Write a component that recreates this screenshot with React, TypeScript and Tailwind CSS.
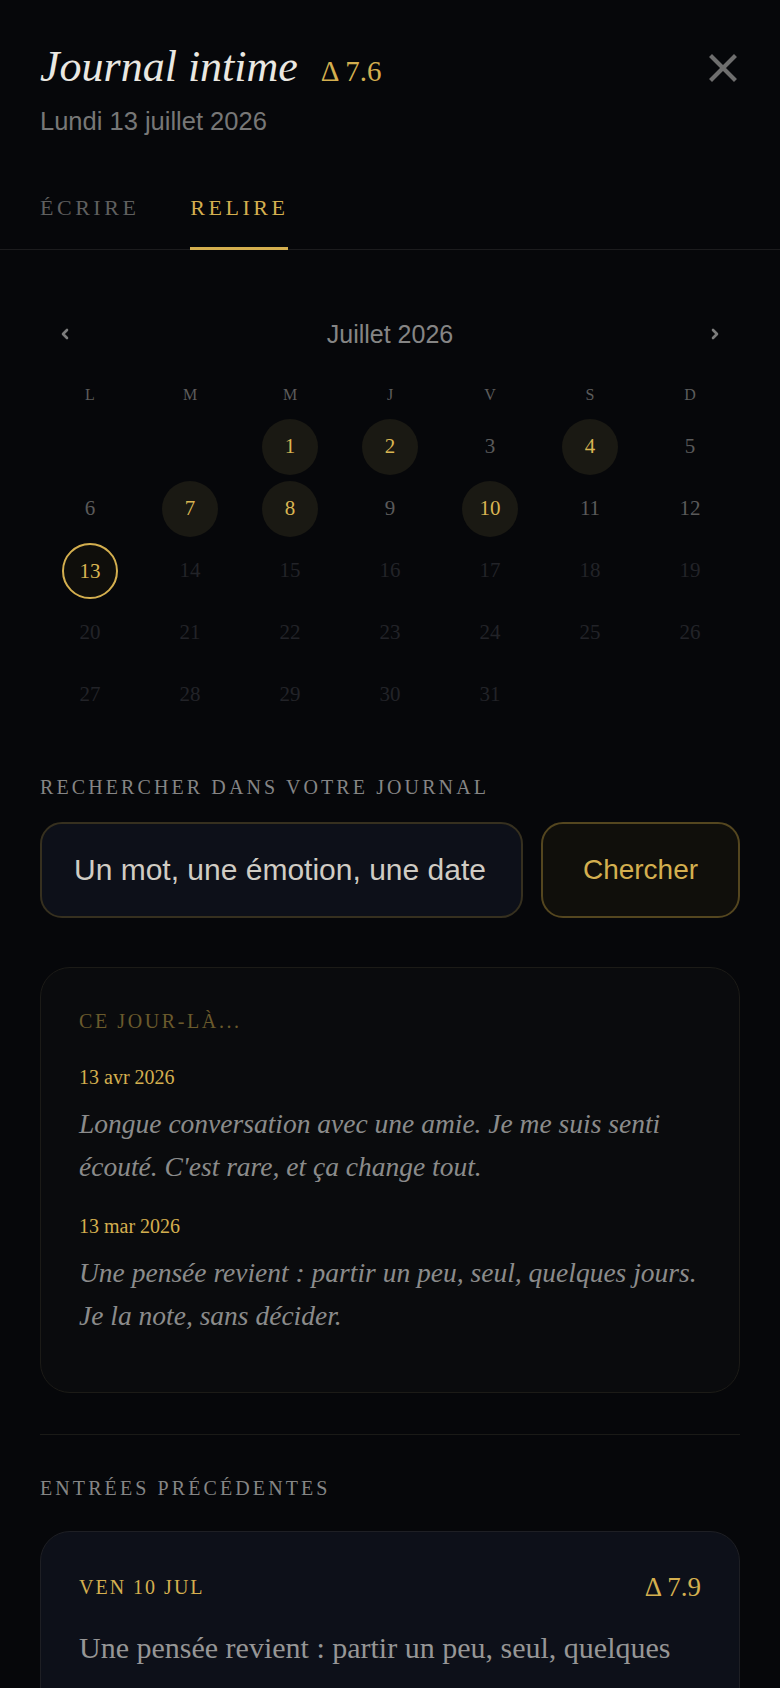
import { useState } from 'react';

const serif = { fontFamily: '"Liberation Serif", "Times New Roman", serif' };
const sans = { fontFamily: '"Liberation Sans", Arial, sans-serif' };

const withEntry = [1, 2, 4, 7, 8, 10];
const today = 13;

const memories = [
  {
    date: '13 avr 2026',
    text: "Longue conversation avec une amie. Je me suis senti écouté. C'est rare, et ça change tout.",
  },
  {
    date: '13 mar 2026',
    text: 'Une pensée revient : partir un peu, seul, quelques jours. Je la note, sans décider.',
  },
];

const entries = [
  { day: 'Ven 10 jul', score: '7.9', text: 'Une pensée revient : partir un peu, seul, quelques jours. Je la note, sans décider.' },
  { day: 'Mer 8 jul', score: '7.4', text: 'Matinée calme. Un café en terrasse, le bruit de la ville au loin.' },
];

function CloseIcon() {
  return (
    <svg width="30" height="30" viewBox="0 0 30 30" fill="none" stroke="#6e6e6e" strokeWidth="4.2" strokeLinecap="square">
      <path d="M4 4 L26 26 M26 4 L4 26" />
    </svg>
  );
}

function Chevron({ dir }: { dir: 'left' | 'right' }) {
  return (
    <svg width="10" height="14" viewBox="0 0 10 14" fill="none" stroke="#7c7c7c" strokeWidth="2.6" strokeLinecap="round" strokeLinejoin="round">
      {dir === 'left' ? <path d="M7 3 L3 7 L7 11" /> : <path d="M3 3 L7 7 L3 11" />}
    </svg>
  );
}

function Calendar() {
  const cells: (number | null)[] = [null, null];
  for (let d = 1; d <= 31; d++) cells.push(d);

  return (
    <section className="mt-[67px]">
      <div className="flex items-center justify-between">
        <button type="button" className="flex h-[35px] w-[50px] items-center justify-center">
          <Chevron dir="left" />
        </button>
        <h2 className="text-[25px] leading-[35px] text-[#858585]" style={sans}>
          Juillet 2026
        </h2>
        <button type="button" className="flex h-[35px] w-[50px] items-center justify-center">
          <Chevron dir="right" />
        </button>
      </div>

      <div className="mt-[31px] grid grid-cols-7 text-center text-[16px] leading-6 text-[#5c5c5c]" style={serif}>
        {['L', 'M', 'M', 'J', 'V', 'S', 'D'].map((d, i) => (
          <span key={i}>{d}</span>
        ))}
      </div>

      <div className="mt-[12px] grid grid-cols-7 gap-y-[6px]" style={serif}>
        {cells.map((d, i) => {
          if (d === null) return <div key={i} className="h-[56px]" />;
          const has = withEntry.includes(d);
          const isToday = d === today;
          const future = d > today;
          return (
            <div key={i} className="flex h-[56px] items-center justify-center">
              <span
                className={
                  isToday
                    ? 'flex size-[56px] items-center justify-center rounded-full border-[2.5px] border-[#d4af4f] bg-[#0f0e0b] pt-[3px] text-[21px] text-[#d9b552]'
                    : has
                      ? 'flex size-[56px] items-center justify-center rounded-full bg-[#1a1913] text-[21px] text-[#d9b552]'
                      : future
                        ? 'flex size-[56px] items-center justify-center text-[21px] text-[#222328]'
                        : 'flex size-[56px] items-center justify-center text-[21px] text-[#5a5a5a]'
                }
              >
                {d}
              </span>
            </div>
          );
        })}
      </div>
    </section>
  );
}

export default function App() {
  const [tab, setTab] = useState<'ecrire' | 'relire'>('relire');
  const [query, setQuery] = useState('');

  return (
    <div className="min-h-screen w-full bg-[#06070a] pb-10">
      <header className="px-10 pt-10">
        <div className="flex items-center justify-between">
          <div className="flex items-baseline gap-[23px]" style={serif}>
            <h1 className="text-[44px] italic leading-[53px] text-[#eae8e2]">Journal intime</h1>
            <span className="text-[29px] text-[#d4af4f]">Δ 7.6</span>
          </div>
          <button type="button" aria-label="Fermer" className="mr-[2px] mt-[2px]">
            <CloseIcon />
          </button>
        </div>
        <p className="mt-[10px] text-[25.5px] leading-[35px] text-[#777777]" style={sans}>
          Lundi 13 juillet 2026
        </p>
      </header>

      <nav className="mt-[56px] flex gap-[51px] border-b border-[#1c1c1e] px-10" style={serif}>
        <button
          type="button"
          onClick={() => setTab('ecrire')}
          className={
            tab === 'ecrire'
              ? '-mb-px border-b-[3px] border-[#d4af4f] pb-[26px] text-[22px] uppercase leading-[26px] tracking-[0.16em] text-[#d4af4f]'
              : '-mb-px border-b-[3px] border-transparent pb-[26px] text-[22px] uppercase leading-[26px] tracking-[0.16em] text-[#5f5f5f]'
          }
        >
          Écrire
        </button>
        <button
          type="button"
          onClick={() => setTab('relire')}
          className={
            tab === 'relire'
              ? '-mb-px border-b-[3px] border-[#d4af4f] pb-[26px] text-[22px] uppercase leading-[26px] tracking-[0.16em] text-[#d4af4f]'
              : '-mb-px border-b-[3px] border-transparent pb-[26px] text-[22px] uppercase leading-[26px] tracking-[0.16em] text-[#5f5f5f]'
          }
        >
          Relire
        </button>
      </nav>

      <main className="px-10">
        <Calendar />

        <section className="mt-[50px]">
          <p className="text-[20px] uppercase leading-[28px] tracking-[0.155em] text-[#858585]" style={serif}>
            Rechercher dans votre journal
          </p>
          <div className="mt-[21px] flex gap-[18px]">
            <input
              value={query}
              onChange={(e) => setQuery(e.target.value)}
              placeholder="Un mot, une émotion, une date…"
              className="h-[96px] min-w-0 flex-1 rounded-[22px] border-2 border-[#36301f] bg-[#0d1019] px-[32px] text-[30px] text-[#d6d2ca] outline-none placeholder:text-[#d0ccc4]"
              style={sans}
            />
            <button
              type="button"
              className="h-[96px] w-[199px] rounded-[22px] border-2 border-[#54461f] bg-[#100f0b] text-[28px] text-[#d4af4f]"
              style={sans}
            >
              Chercher
            </button>
          </div>
        </section>

        <section className="mt-[49px] rounded-[30px] border border-[#1c1b17] bg-[#0a0b0d] px-[38px] pb-[31px] pt-[39px]" style={serif}>
          <p className="text-[20px] uppercase leading-[28px] tracking-[0.13em] text-[#6a5a2c]">Ce jour-là...</p>
          <div className="mt-[28px]">
            {memories.map((m) => (
              <div key={m.date} className="mb-[24px]">
                <p className="text-[20px] leading-[28px] text-[#d4af4f]">{m.date}</p>
                <p className="mt-[11px] text-[27.5px] italic leading-[43px] text-[#8b8b8b]">{m.text}</p>
              </div>
            ))}
          </div>
        </section>

        <div className="mt-[41px] h-px bg-[#1a1a17]" />

        <section className="mt-[39px]" style={serif}>
          <p className="text-[20px] uppercase leading-[28px] tracking-[0.155em] text-[#858585]">Entrées précédentes</p>
          <div className="mt-[29px] flex flex-col gap-5">
            {entries.map((e) => (
              <article key={e.day} className="rounded-[30px] border border-[#1e1f24] bg-[#0d1019] px-[38px] pb-[38px] pt-[41px]">
                <div className="flex items-center justify-between">
                  <p className="text-[20px] uppercase leading-[28px] tracking-[0.1em] text-[#d4af4f]">{e.day}</p>
                  <p className="text-[27px] leading-[28px] text-[#d4af4f]">Δ {e.score}</p>
                </div>
                <p className="mt-[20px] text-[30px] leading-[54px] text-[#969696]">{e.text}</p>
              </article>
            ))}
          </div>
        </section>
      </main>
    </div>
  );
}
